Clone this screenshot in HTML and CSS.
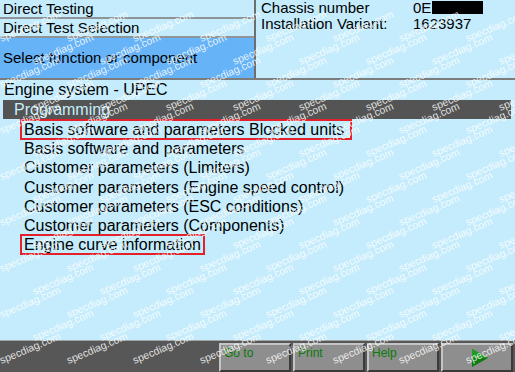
FILE: index.html
```html
<!DOCTYPE html>
<html lang="en">
<head>
  <meta charset="UTF-8">
  <title>Direct Testing</title>
  <link rel="stylesheet" href="styles.css">
</head>
<body>
  <div class="screen">
    <header class="top">
      <div class="nav">
        <div class="nav-row">Direct Testing</div>
        <div class="nav-row">Direct Test Selection</div>
        <div class="nav-row current">Select function or component</div>
      </div>
      <div class="vehicle">
        <div class="field"><span class="label">Chassis number</span><span class="value">0E<span class="redacted"></span></span></div>
        <div class="field"><span class="label">Installation Variant:</span><span class="value">1623937</span></div>
      </div>
    </header>

    <div class="system">Engine system - UPEC</div>
    <div class="group">Programming</div>

    <ul class="menu">
      <li class="item marked">Basis software and parameters Blocked units</li>
      <li class="item">Basis software and parameters</li>
      <li class="item">Customer parameters (Limiters)</li>
      <li class="item">Customer parameters (Engine speed control)</li>
      <li class="item">Customer parameters (ESC conditions)</li>
      <li class="item">Customer parameters (Components)</li>
      <li class="item marked">Engine curve information</li>
    </ul>

    <footer class="toolbar">
      <button class="tool">Go to</button>
      <button class="tool">Print</button>
      <button class="tool">Help</button>
      <button class="tool next">
        <svg width="18" height="20" viewBox="0 0 18 20">
          <polygon points="1,1 17,10 1,19" fill="#0c7c10"/>
          <polygon points="1,1 17,10 1,10" fill="#1f9a22"/>
        </svg>
      </button>
    </footer>

    <div class="watermark" id="watermark"></div>
  </div>

  <script>
    // tile the site watermark over the whole screen (two interleaved grids)
    const layer = document.getElementById('watermark');
    function addMark(x, y) {
      const mark = document.createElement('span');
      mark.className = 'mark';
      mark.textContent = 'specdiag.com';
      mark.style.left = x + 'px';
      mark.style.top = (y - 10) + 'px';
      layer.appendChild(mark);
    }
    for (let row = 0; row < 8; row++) {
      for (let col = 0; col < 8; col++) {
        addMark(2 + col * 66.5, 43 + row * 46);
        if (row < 7) addMark(35 + col * 66.5, 66 + row * 46);
      }
    }
  </script>
</body>
</html>
```

FILE: styles.css
```css
body {
  margin: 0;
  background-color: #c4ecfc;
  font-family: "Liberation Sans", Arial, sans-serif;
  color: #000;
}
.screen {
  position: relative;
  width: 515px;
  height: 372px;
  display: flex;
  flex-direction: column;
  overflow: hidden;
  background-color: #c4ecfc;
}

/* header: breadcrumb on the left, vehicle data on the right */
.top {
  display: grid;
  grid-template-columns: 256px 1fr;
  height: 78px;
  border-bottom: 2px solid #7c7c7c;
}
.nav {
  display: flex;
  flex-direction: column;
  border-right: 2px solid #6e6e6e;
}
.nav-row {
  height: 17px;
  line-height: 18px;
  padding-left: 3px;
  font-size: 15px;
  border-bottom: 2px solid #8e9498;
}
.nav-row.current {
  flex: 1;
  border-bottom: none;
  display: flex;
  align-items: center;
  background-color: #67b3f7;
  padding-top: 0;
}
.vehicle {
  padding: 0 0 0 5px;
  font-size: 15px;
}
.field {
  display: flex;
  height: 16px;
  line-height: 16px;
}
.label {
  width: 152px;
}
.redacted {
  display: inline-block;
  width: 51px;
  height: 13px;
  margin-left: 1px;
  vertical-align: -1px;
  background-color: #000;
}

/* system + group title */
.system {
  height: 20px;
  line-height: 20px;
  padding-left: 4px;
  font-size: 16px;
}
.group {
  height: 19px;
  line-height: 19px;
  margin: 0 4px 0 3px;
  padding-left: 11px;
  font-size: 16px;
  color: #c6eefc;
  background-color: #545454;
}

/* function list */
.menu {
  flex: 1;
  list-style: none;
  margin: 0;
  padding: 1px 0 0 0;
  font-size: 16px;
}
.item {
  width: fit-content;
  height: 19.2px;
  line-height: 19.2px;
  margin-left: 21px;
  padding: 0 3px 0 3px;
  box-sizing: border-box;
}
.item.marked {
  outline: 2px solid #e4202a;
  outline-offset: -1px;
}
.item.marked:first-child {
  padding-right: 7px;
}

/* bottom toolbar */
.toolbar {
  height: 29px;
  display: flex;
  justify-content: flex-end;
  gap: 2px;
  padding: 2px 2px 0 0;
  border-top: 1px solid #a4a4a4;
  background-color: #575757;
}
.tool {
  width: 72px;
  height: 29px;
  margin: 0;
  padding: 1px 3px;
  display: flex;
  align-items: flex-start;
  font-family: "Liberation Sans", Arial, sans-serif;
  font-size: 12px;
  color: #0a7a0a;
  background-color: #8e8e8e;
  border: 2px solid;
  border-color: #c4c4c4 #3a3a3a #3a3a3a #c4c4c4;
}
.tool.next {
  justify-content: center;
  align-items: center;
  padding: 0 0 0 6px;
}

/* watermark layer over everything */
.watermark {
  position: absolute;
  inset: 0;
  pointer-events: none;
}
.mark {
  position: absolute;
  font-family: "Liberation Sans", Arial, sans-serif;
  font-size: 10.5px;
  line-height: 10px;
  white-space: nowrap;
  color: rgba(255, 255, 255, 0.85);
  transform: rotate(-23deg);
  transform-origin: left bottom;
}
```
